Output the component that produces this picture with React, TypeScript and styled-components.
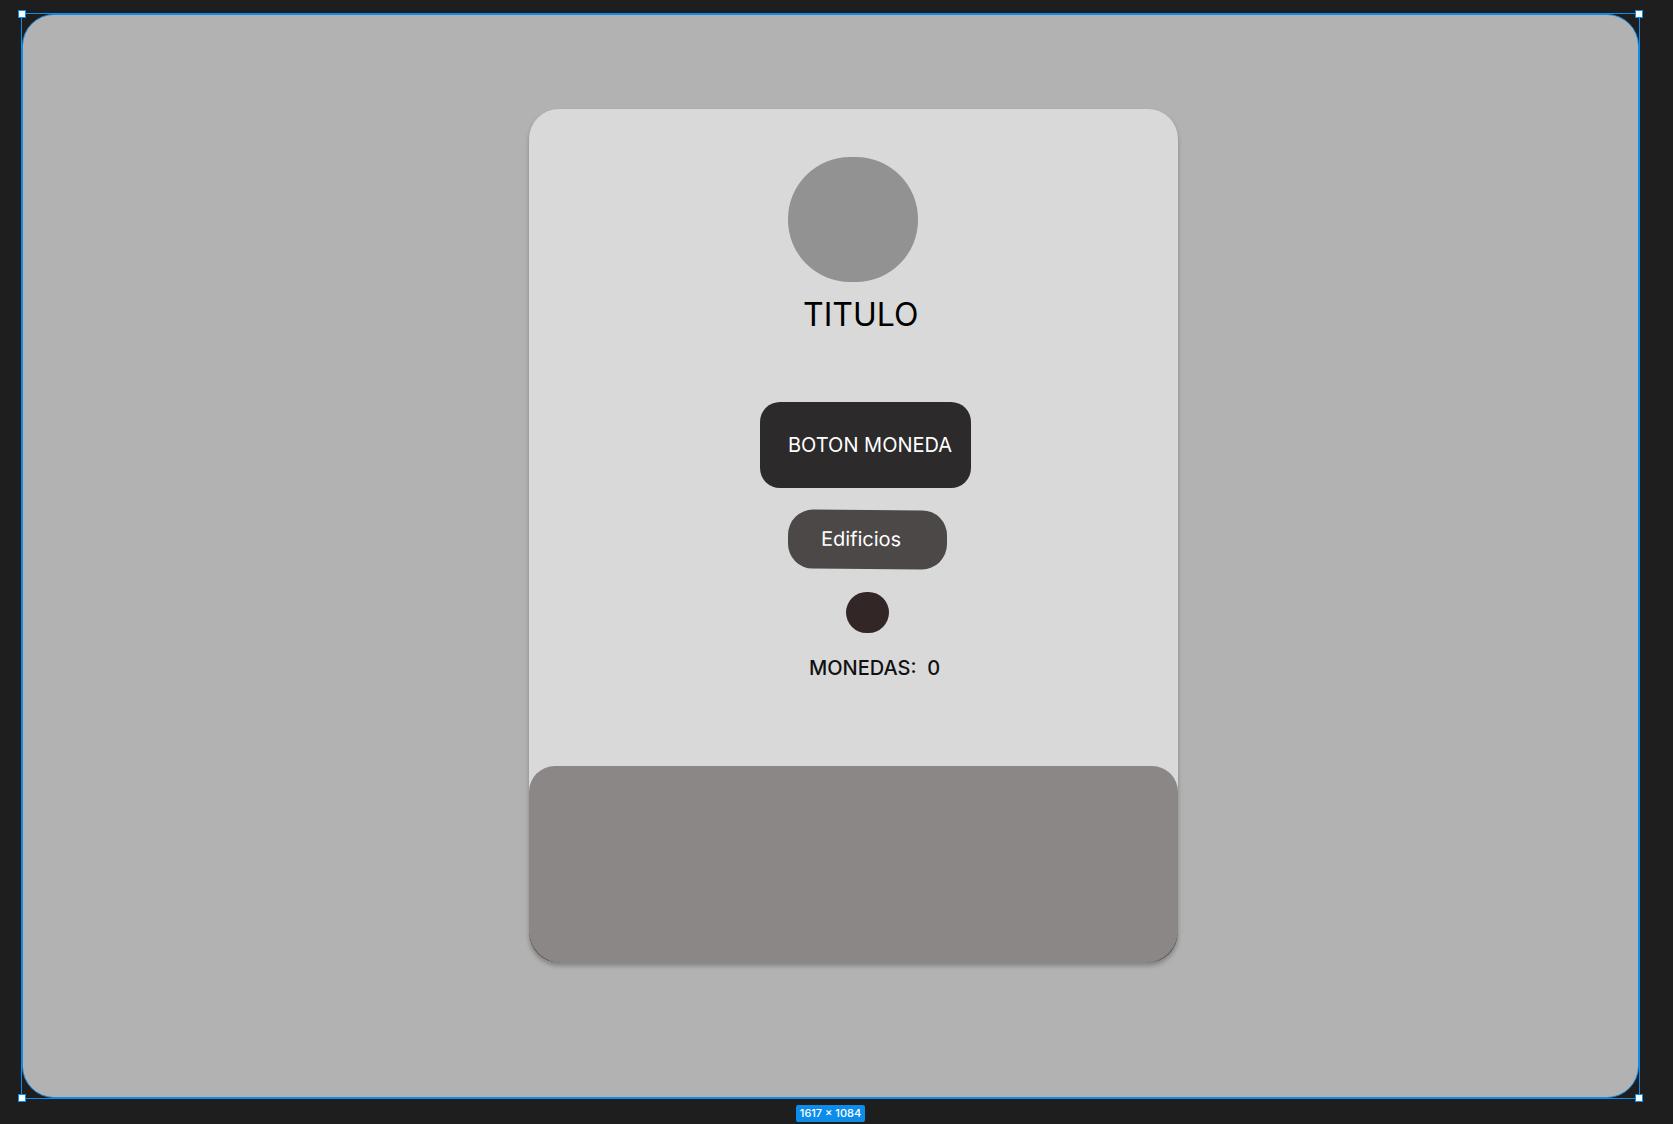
import React from "react";
import styled, { createGlobalStyle } from "styled-components";

const accent = "#0d8ce9";

const GlobalStyle = createGlobalStyle`
  *, *::before, *::after { box-sizing: border-box; }
  body {
    margin: 0;
    background: #1e1e1e;
    font-family: Inter, "Liberation Sans", sans-serif;
  }
`;

const Canvas = styled.div`
  display: flex;
  flex-direction: column;
  min-height: 100vh;
  padding: 14px 34px 2px 22px;
`;

const Selection = styled.div`
  position: relative;
  flex: 1;
  display: flex;
  outline: 1px solid ${accent};
`;

const Handle = styled.span<{ $x: "left" | "right"; $y: "top" | "bottom" }>`
  position: absolute;
  ${(p) => p.$x}: -4px;
  ${(p) => p.$y}: -4px;
  width: 8px;
  height: 8px;
  border: 1px solid ${accent};
  background: #fff;
`;

const Frame = styled.main`
  flex: 1;
  display: flex;
  justify-content: center;
  align-items: flex-start;
  padding: 94px 0 94px 46px;
  border: 1px solid ${accent};
  border-radius: 32px;
  background: #b2b2b2;
`;

const Card = styled.section`
  display: flex;
  flex-direction: column;
  width: 100%;
  max-width: 649px;
  border-radius: 30px;
  background: #d9d9d9;
  box-shadow: 0 3px 4px rgba(0, 0, 0, 0.25), inset 0 -6px 0 #64605e;
`;

const Content = styled.div`
  display: flex;
  flex-direction: column;
  align-items: flex-start;
  align-self: center;
  padding: 48px 0 86px 24px;
`;

const Avatar = styled.div`
  width: 130px;
  height: 125px;
  margin-left: 28px;
  border-radius: 62px;
  background: #929292;
`;

const Title = styled.h1`
  margin: 13px 0 67px 43px;
  font-size: 32px;
  font-weight: 400;
  line-height: 40px;
  color: #000;
`;

const Button = styled.button`
  border: 0;
  padding: 0;
  font-family: inherit;
  font-size: 20px;
  font-weight: 400;
  line-height: 24px;
  text-align: left;
  white-space: nowrap;
  color: #fff;
  cursor: pointer;
`;

const CoinButton = styled(Button)`
  width: 211px;
  height: 86px;
  padding-left: 28px;
  border-radius: 20px;
  background: #2c2a2b;
`;

const BuildingsButton = styled(Button)`
  width: 159px;
  height: 59px;
  margin: 22px 0 0 28px;
  padding: 0 0 2px 33px;
  border-radius: 25px;
  background: #4c4847;
  transform: rotate(0.4deg);
`;

const Coin = styled.div`
  width: 43px;
  height: 41px;
  margin: 23px 0 0 86px;
  border-radius: 21px;
  background: #332627;
`;

const Counter = styled.p`
  margin: 23px 0 0 49px;
  font-size: 20px;
  font-weight: 500;
  line-height: 24px;
  white-space: pre;
  color: #111;
`;

const Panel = styled.div`
  height: 197px;
  border-radius: 26px 26px 33px 33px;
  background: #8b8786;
`;

const SizeBadge = styled.div`
  align-self: center;
  margin-top: 7px;
  padding: 0 4px;
  border-radius: 2px;
  background: ${accent};
  color: #fff;
  font-size: 11px;
  font-weight: 500;
  line-height: 17px;
`;

export default function App() {
  return (
    <>
      <GlobalStyle />
      <Canvas>
        <Selection>
          <Frame>
            <Card>
              <Content>
                <Avatar />
                <Title>TITULO</Title>
                <CoinButton type="button">BOTON MONEDA</CoinButton>
                <BuildingsButton type="button">Edificios</BuildingsButton>
                <Coin />
                <Counter>{"MONEDAS:  0"}</Counter>
              </Content>
              <Panel />
            </Card>
          </Frame>
          <Handle $x="left" $y="top" />
          <Handle $x="right" $y="top" />
          <Handle $x="left" $y="bottom" />
          <Handle $x="right" $y="bottom" />
        </Selection>
        <SizeBadge>1617 × 1084</SizeBadge>
      </Canvas>
    </>
  );
}
